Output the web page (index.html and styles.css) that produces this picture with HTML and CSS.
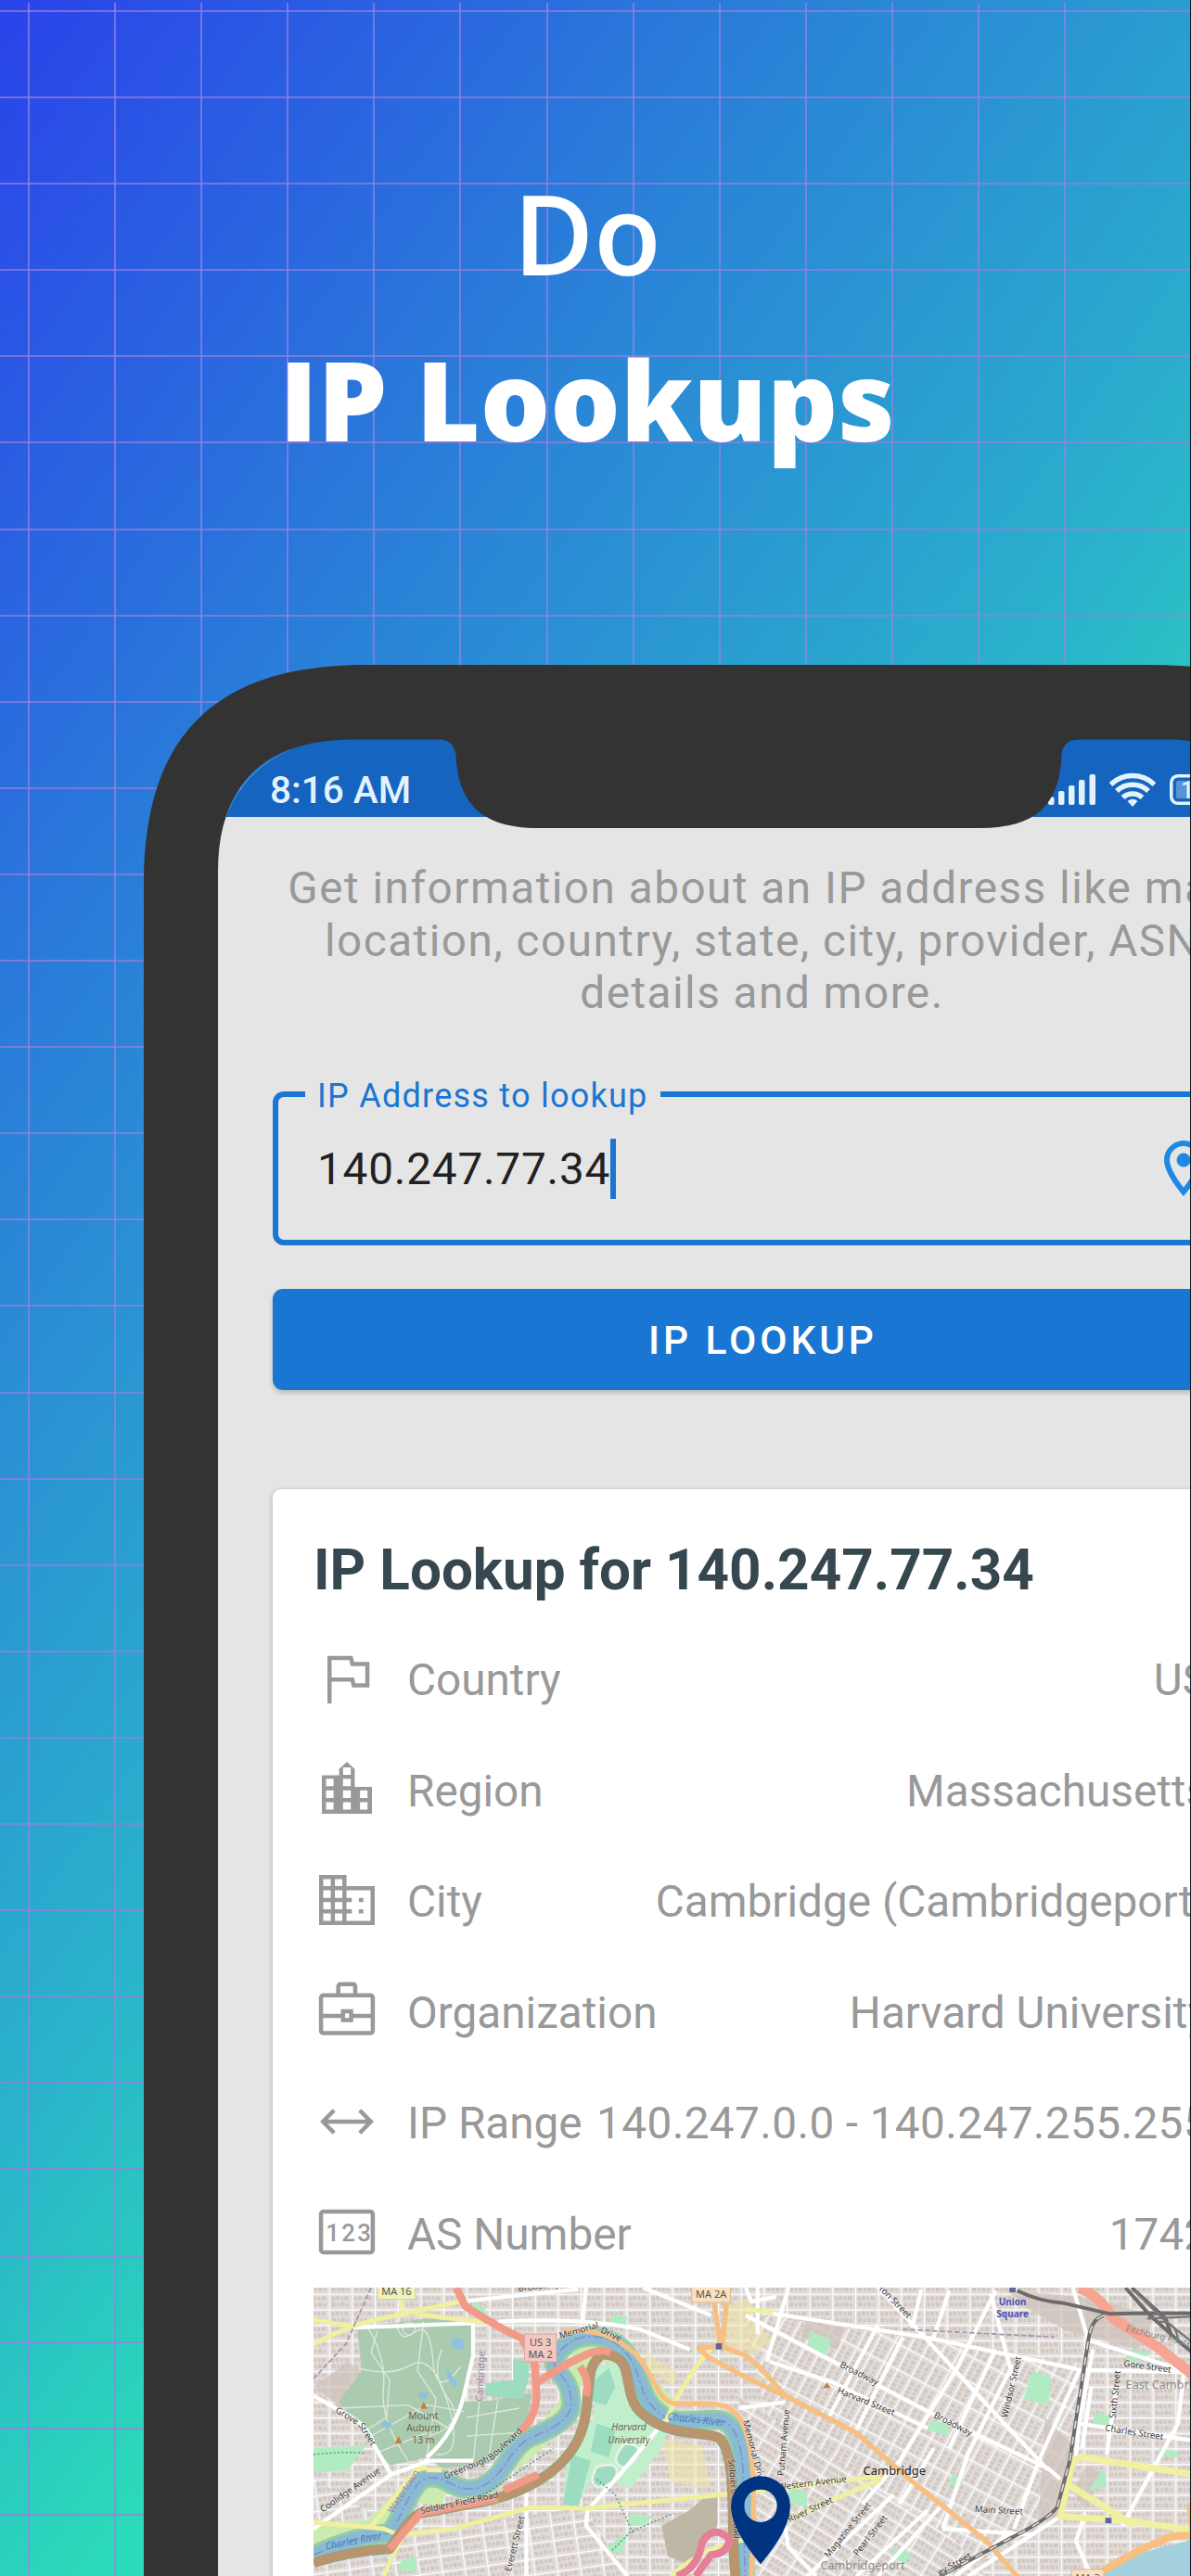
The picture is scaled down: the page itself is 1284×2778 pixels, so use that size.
FILE: index.html
```html
<!DOCTYPE html>
<html lang="en">
<head>
    <meta charset="UTF-8">
    <meta name="viewport" content="width=device-width, initial-scale=1.0">
    <title>Do IP Lookups</title>
    <link rel="stylesheet" href="styles.css">
</head>
<body>
    <header class="headline">
        <p>Do</p>
        <h1>IP Lookups</h1>
    </header>

    <div class="phone">
        <div class="screen">
            <div class="status-bar">
                <span class="time">8:16 AM</span>
                <div class="status-icons">
                    <svg width="51" height="33" viewBox="0 0 51 33" fill="#e3f2fd">
                        <rect x="0" y="24.500" width="6.500" height="8.500" rx="2"/>
                        <rect x="11" y="18" width="6.500" height="15" rx="2"/>
                        <rect x="22" y="12" width="6.500" height="21" rx="2"/>
                        <rect x="33" y="6" width="6.500" height="27" rx="2"/>
                        <rect x="44.500" y="0" width="6.500" height="33" rx="2"/>
                    </svg>
                    <svg width="50" height="37" viewBox="0 0 50 37" fill="none" stroke="#e3f2fd" stroke-width="5.500">
                        <path d="M1.500 13a34 34 0 0 1 47 0M8 20a25 25 0 0 1 34 0M14.500 27a15.500 15.500 0 0 1 21 0"/>
                        <path d="M19.500 31q5.500-4.500 11 0l-5.500 6z" fill="#e3f2fd" stroke="none"/>
                    </svg>
                    <svg width="60" height="33" viewBox="0 0 60 33">
                        <rect x="1.750" y="1.750" width="52" height="29.500" rx="7" fill="none" stroke="#e3f2fd" stroke-width="3.500"/>
                        <rect x="7" y="7" width="42" height="19" rx="2" fill="#5a92d6"/>
                        <text x="12" y="26" class="battery-text">100</text>
                    </svg>
                </div>
            </div>

            <p class="intro">Get information about an IP address like map<br>location, country, state, city, provider, ASN<br>details and more.</p>

            <fieldset class="field">
                <legend>IP Address to lookup</legend>
                <span class="value">140.247.77.34</span>
                <span class="caret"></span>
                <svg class="pin" viewBox="0 0 24 24" fill="#1e88e5">
                    <path d="M12 2C8.130 2 5 5.130 5 9c0 5.250 7 13 7 13s7-7.750 7-13c0-3.870-3.130-7-7-7zM7 9c0-2.760 2.240-5 5-5s5 2.240 5 5c0 2.880-2.880 7.190-5 9.880C9.920 16.210 7 11.850 7 9z"/>
                    <circle cx="12" cy="9" r="2.500"/>
                </svg>
            </fieldset>

            <button class="lookup" type="button">IP LOOKUP</button>

            <section class="card">
                <h2>IP Lookup for 140.247.77.34</h2>
                <div class="row">
                    <svg class="icon" viewBox="0 0 24 24"><path d="M5.750 21V4.700h7.700l.5 2.100h5.400v7.700h-4.900l-.5-2.100H5.750"/></svg>
                    <span>Country</span><span class="data">US</span>
                </div>
                <div class="row">
                    <svg class="icon solid" viewBox="0 0 24 24"><path fill-rule="evenodd" d="M3 21V7.200h6.200V4.900L12 2.300l2.800 2.600v6.400H21V21zM4.500 8.400v2.700h2.700V8.400zM4.500 12.600v2.700h2.700v-2.700zM4.500 16.800v2.700h2.700v-2.700zM10.600 4.300V7h2.800V4.300zM10.600 8.400v2.700h2.800V8.400zM10.600 12.600v2.700h2.800v-2.700zM10.600 16.800v2.700h2.800v-2.700zM16.700 12.600v2.700h2.700v-2.700zM16.700 16.800v2.700h2.700v-2.700z"/></svg>
                    <span>Region</span><span class="data">Massachusetts</span>
                </div>
                <div class="row">
                    <svg class="icon" viewBox="0 0 24 24"><path d="M2.750 3.750H11.100v4h10.150v12.500H2.750zM6.950 3.750v16.500M11.100 7.750v12.500M2.750 7.750h8.350M2.750 12h11M2.750 16.100h11M16.300 12h1.600M16.300 16.100h1.600"/></svg>
                    <span>City</span><span class="data">Cambridge (Cambridgeport)</span>
                </div>
                <div class="row">
                    <svg class="icon" viewBox="0 0 24 24"><rect x="2.700" y="6.600" width="18.600" height="13.600" rx=".9"/><path d="M8.900 6.500V3.600q0-1 1-1h4.200q.9 0 .9 1v2.900M3 14h7.500M13.500 14H21M10.600 12.300h2.900v3.200h-2.900z"/></svg>
                    <span>Organization</span><span class="data">Harvard University</span>
                </div>
                <div class="row">
                    <svg class="icon" viewBox="0 0 24 24"><path d="M3.500 12h17M7.400 7.900L3.400 12l4 4.100M16.600 7.900l4 4.100-4 4.100"/></svg>
                    <span>IP Range</span><span class="data range">140.247.0.0 - 140.247.255.255</span>
                </div>
                <div class="row">
                    <svg class="icon" viewBox="0 0 24 24"><rect x="2.700" y="4.700" width="18.600" height="14.600" rx=".9"/><text x="4.400" y="15.200" class="digits">123</text></svg>
                    <span>AS Number</span><span class="data">1742</span>
                </div>

                <svg class="map" viewBox="24 80 2880 934">
                    <defs>
                        <pattern id="blocks" width="74" height="50" patternUnits="userSpaceOnUse">
                            <rect width="74" height="50" fill="#e0dcda"/>
                            <path d="M8 9h9v12H8zM21 7h11v13H21zM37 9h8v11h-8zM50 8h13v12H50zM9 29h12v12H9zM26 30h8v11h-8zM39 28h12v13H39zM56 31h8v10h-8z" fill="#d2c6be"/>
                            <path d="M0 0h74M0 0v50" stroke="#fff" stroke-width="7"/>
                        </pattern>
                        <pattern id="blocksNE" href="#blocks" patternTransform="rotate(-62)"/>
                        <pattern id="blocksSE" href="#blocks" patternTransform="rotate(32)"/>
                        <pattern id="blocksN" href="#blocks" patternTransform="rotate(-8)"/>
                    </defs>

                    <!-- neighbourhoods -->
                    <rect x="24" y="80" width="2880" height="934" fill="url(#blocks)"/>
                    <path d="M1420 160L2520 330 2420 820 2100 1014H1750L1500 560z" fill="url(#blocksNE)"/>
                    <path d="M1400 430L2100 900 2200 1014H1420z" fill="url(#blocksSE)"/>
                    <path d="M24 700L300 860 240 1014H24zM300 880L900 790 1040 1014H260z" fill="url(#blocksN)"/>
                    <path d="M24 400l110-80 60 40-80 110zM1620 180l120 30-20 70-120-40zM2270 90l240 20 240 60-60 110-230-60-140-80zM2390 500l90 90-30 240-80-10zM2520 660l60 20-60 120-40-60z" fill="#cfc3bb" opacity=".75"/>
                    <path d="M1150 850l90-50 60-50h30v100l-80 130-80-30z" fill="#bdb8a6"/>
                    <path d="M1150 570l130 20 30 140-130-20zM1350 140l90-30v170l-90 20zM1430 170l80 80-80 60zM1100 290l100 60-10 50-90-60z" fill="#f1e4a6" opacity=".55"/>

                    <!-- parks -->
                    <path d="M165 210L390 180 540 195 535 330 500 450 600 445 730 420 715 520 690 560 590 650 440 665 390 630 270 655 200 560 105 450 180 350z" fill="#aacbaf"/>
                    <path d="M24 850L200 830 360 670 390 660 460 700 440 790 300 760 260 850 24 940zM830 260q160-60 260 80l110 110-30 40-110-50-60-110-80-20-40 120-80 140-130 110 40-100 130-160 20-120z" fill="#cdebb0"/>
                    <path d="M940 330h70l30 130 130 80-20 60-100 130-120-40-50 90h-50l20-180 80-100z" fill="#c2efcb"/>
                    <path d="M580 390l90-10v-70l50 10v50l-20 70-120-10zM920 390l60-50 20 60-30 60-40-10zM940 520l60 20-20 90-60-20zM860 620l60 20-40 150-50-10z" fill="#9cdcc0"/>
                    <path d="M24 600l170-10-60 80-110 10zM1630 220l70 30-20 50-60-20zM2350 350l60 20-10 90-80-20zM2020 510l60 10-5 40-65-20zM2550 485l55 10v30h-60zM2660 280l70 10-30 30h-50zM1560 730l60 10v50l-50-10zM2090 680l35 20-20 40-25-30zM1900 920l60 20-20 30-40-10zM1050 810l70 10-30 30h-50zM1010 890l30-10-20 60-60-10zM540 120l40 30-5 25-40-20zM990 170l50 5-10 30-45-10zM310 960l50-10-10 50-55-5zM2760 600l60 10v20l-60-5zM2580 660l10 60-60 20z" fill="#b0ebc2"/>
                    <path d="M940 660q70-20 65 20t-60 45q-35-10-5-65zM1030 585q60 0 40 40t-50 35q-40-20 10-75z" fill="#9edbc1" stroke="#e6f3e6" stroke-width="8"/>
                    <g fill="none" stroke="#dfe9dc" stroke-width="4">
                        <path d="M200 210q60 100 50 200t80 230M290 185q10 80 60 40t60 90 90 20M170 340q100 30 170-10t120 130-40 160M230 220l-20 70 60 90-10 120-80 50M380 190l-20 160 60 90-30 190M440 280q-40 80 20 160t-60 120M110 470l220-10 140 80M210 560l180-100 120 20M520 500l170-30M520 560l160-10M560 450l-20 200M620 445l-30 190M240 610l150-60"/>
                        <circle cx="332" cy="213" r="20"/>
                    </g>
                    <path d="M468 250q25-20 45 8 0 30-25 22t-20-30zM455 340l35 50-15 12-22-38zM240 520q25-18 40 8-20 20-40-8zM365 415l30 5-8 22-22-6z" fill="#8fc3dd"/>

                    <!-- Charles River -->
                    <g fill="none" stroke-linejoin="round">
                        <path d="M24 945Q170 880 270 875C330 790 340 700 400 695S470 740 550 730C650 700 650 590 740 560 830 520 870 490 855 430 850 360 780 350 810 300 870 210 980 230 1025 280 1100 360 1060 440 1170 505 1260 530 1330 480 1375 530 1430 600 1410 750 1420 1014" stroke="#96cda3" stroke-width="64"/>
                        <path d="M24 945Q170 880 270 875C330 790 340 700 400 695S470 740 550 730C650 700 650 590 740 560 830 520 870 490 855 430 850 360 780 350 810 300 870 210 980 230 1025 280 1100 360 1060 440 1170 505 1260 530 1330 480 1375 530 1430 600 1410 750 1420 1014" stroke="#8bbad3" stroke-width="46"/>
                        <path d="M24 945Q170 880 270 875C330 790 340 700 400 695S470 740 550 730C650 700 650 590 740 560 830 520 870 490 855 430 850 360 780 350 810 300 870 210 980 230 1025 280 1100 360 1060 440 1170 505 1260 530 1330 480 1375 530 1430 600 1410 750 1420 1014" stroke="#7b95cb" stroke-width="5" stroke-dasharray="34 10 6 10"/>
                    </g>
                    <path d="M2500 1014Q2640 960 2750 925L2850 900 2904 850V1014z" fill="#a3d0dc"/>

                    <!-- minor roads -->
                    <g fill="none" stroke="#fff" stroke-width="13" stroke-linejoin="round">
                        <path d="M24 430L120 485Q200 520 220 590L275 685 400 640M275 685L24 860M380 640L540 640M140 210L540 195V300L510 430Q480 550 390 630"/>
                        <path d="M500 125L880 85M620 190Q900 175 1080 215L1240 280M905 80L895 190M1090 80l220 90M1160 510L1010 690 910 800 905 850 1040 1014M712 720V1014"/>
                        <path d="M1422 150L2000 240 2500 345 2904 355M1422 170L2010 480 2400 665 2440 700M1500 320L1700 385 2010 535M1560 80L1490 320M1520 110L1440 125 1422 80M1850 80L2000 240 2240 500 2400 670M2230 90L2100 350 1920 640 1800 780M2080 90L2030 240M2215 100L2285 370"/>
                        <path d="M2285 330L2140 620 2060 860M2500 350L2370 640 2290 860M2545 280L2500 520 2490 630M2840 350L2820 520 2640 850M2480 80L2530 250 2904 370M2060 860L2350 880M2280 870L2100 1014M2060 780L1850 1014M1900 750L1620 1014M2010 800L1780 1014M2440 820L2140 1014M2520 810L2490 900 2540 1014M1540 800l20 120 90 94M2030 600L1920 780M2500 520L2904 580M2540 400l-30 200M2620 400l-30 220M2230 280L2080 600M1990 85L1960 210M1850 200l-160 300M1930 240l-150 300M1400 470l150-20M1460 80v150"/>
                    </g>

                    <!-- yellow and orange roads -->
                    <g fill="none" stroke="#eff0a0" stroke-width="15" stroke-linejoin="round">
                        <path d="M24 265Q130 205 220 185L500 125M24 185L150 205M300 85L315 170M350 165L600 195M1160 520Q1220 380 1310 275M24 840Q150 850 250 860L300 880 480 860 730 790 900 795 1440 740 1860 690M310 885L250 1014M390 665Q360 660 340 690L210 855M440 670H390M1180 1014Q1280 920 1422 895 1600 810 1860 700M1422 150l90 10"/>
                        <path d="M2904 690L2520 630Q2480 620 2470 680L2440 820 2660 835 2904 870M2460 715L2680 850" stroke-width="22"/>
                    </g>
                    <g fill="none" stroke="#f7bf80" stroke-width="16" stroke-linejoin="round">
                        <path d="M830 225C920 210 990 230 1060 290 1130 360 1130 440 1190 455 1300 460 1360 440 1400 500 1460 580 1450 800 1440 1014M1320 130L1340 270 1270 275 1300 305 1422 370 1560 435 1780 550 1940 690 2200 900 2300 1014M1360 130L1345 270 1422 300 1470 340 1550 430"/>
                        <path d="M2550 1014Q2680 930 2800 885L2870 880 2860 780M2870 880l34-20" stroke-width="24"/>
                    </g>
                    <g fill="none" stroke-linejoin="round">
                        <path d="M24 970Q150 930 270 925C320 850 350 815 370 810L560 775C740 740 890 640 905 480 920 390 905 330 960 295 1080 300 1010 430 1090 490 1180 570 1300 540 1340 570 1400 640 1370 900 1390 1014" stroke="#98a07c" stroke-width="33"/>
                        <path d="M24 970Q150 930 270 925C320 850 350 815 370 810L560 775C740 740 890 640 905 480 920 390 905 330 960 295 1080 300 1010 430 1090 490 1180 570 1300 540 1340 570 1400 640 1370 900 1390 1014" stroke="#bb946e" stroke-width="25"/>
                        <path d="M270 925L370 810 620 762M485 80L515 140Q620 210 700 245L740 330 745 430Q740 510 690 545M750 385Q850 320 900 300 950 275 985 290M905 430q15-50-20-95M640 735l110-50" stroke="#f09a87" stroke-width="25"/>
                        <path d="M2500 80Q2570 110 2610 180L2750 270 2904 390" stroke="#f5a592" stroke-width="34"/>
                        <path d="M1200 1014q70-30 80-110 40-60 90-10-10 50-60 50l-50 70" stroke="#e57f99" stroke-width="24"/>
                    </g>

                    <!-- railways -->
                    <g fill="none">
                        <path d="M2300 90Q2370 125 2450 130L2600 165Q2780 160 2904 165M2650 80L2730 170 2830 260 2904 320M2670 80L2780 180 2800 240M2580 170Q2540 180 2530 250L2470 640 2430 790Q2400 830 2280 890L2050 1014" stroke="#6c6c6c" stroke-width="12"/>
                        <path d="M2580 170Q2540 180 2530 250L2470 640 2430 790Q2400 830 2280 890L2050 1014" stroke="#ddd" stroke-width="5" stroke-dasharray="26 26"/>
                        <path d="M2720 180L2904 172M2760 190q60 0 60 70M2680 90l90 90 100 80" stroke="#777" stroke-width="7"/>
                        <path d="M1930 215L2420 240M24 375L130 260 210 80" stroke="#a58fb0" stroke-width="5" stroke-dasharray="16 8"/>
                        <path d="M24 620q90-10 170-5M560 760q120-80 240-160M940 700l60 50 60 130M990 930l60-60 140-60" stroke="#4f8f87" stroke-width="4" stroke-dasharray="6 7"/>
                    </g>
                    <path d="M1325 260h20v20h-20zM2275 80h20v15h-20zM2585 825h20v18h-20z" fill="#5c63a6"/>
                    <path d="M370 472l10-22 12 22zM287 585l12-24 12 24zM1672 405l14-18 10 18z" fill="#c77d3b"/>

                    <!-- shields and labels -->
                    <g stroke-width="3">
                        <rect x="231" y="60" width="123" height="58" fill="#eef3bd" stroke="#cfd391"/>
                        <rect x="1247" y="70" width="125" height="58" fill="#fadfc0" stroke="#dcb88e"/>
                        <rect x="706" y="230" width="104" height="90" fill="#f3c8c0" stroke="#dea49b"/>
                        <rect x="2476" y="992" width="104" height="58" fill="#fadfc0" stroke="#dcb88e"/>
                    </g>
                    <g class="shield">
                        <text x="292" y="104">MA 16</text>
                        <text x="1310" y="114">MA 2A</text>
                        <text x="758" y="270">US 3</text>
                        <text x="758" y="309">MA 2</text>
                        <text x="2528" y="1030">MA 3</text>
                    </g>
                    <g class="street">
                        <text transform="translate(686 92) rotate(-6)">Broadway</text>
                        <text transform="translate(93 482) rotate(31)">Grove</text>
                        <text transform="translate(168 525) rotate(58)">Street</text>
                        <text transform="translate(54 808) rotate(-35)">Coolidge Avenue</text>
                        <text transform="translate(662 1000) rotate(-76)">Everett Street</text>
                        <text transform="translate(1852 85) rotate(46)">ton Street</text>
                        <text transform="translate(1724 336) rotate(27)">Broadway</text>
                        <text transform="translate(1716 420) rotate(22)">Harvard Street</text>
                        <text transform="translate(2028 499) rotate(27)">Broadway</text>
                        <text transform="translate(1545 690) rotate(-85)">Putnam Avenue</text>
                        <text transform="translate(2268 502) rotate(-77)">Windsor Street</text>
                        <text transform="translate(2618 504) rotate(-84)">Sixth Street</text>
                        <text transform="translate(2643 334) rotate(8)">Gore Street</text>
                        <text transform="translate(2583 543) rotate(9)">Charles Street</text>
                        <text transform="translate(2162 806) rotate(3)">Main Street</text>
                        <text transform="translate(1528 735) rotate(-7)">Western Avenue</text>
                        <text transform="translate(1564 840) rotate(-25)">River Street</text>
                        <text transform="translate(1690 956) rotate(-51)">Magazine Street</text>
                        <text transform="translate(1784 950) rotate(-52)">Pearl Street</text>
                        <text transform="translate(2050 1012) rotate(-30)">ey Street</text>
                        <text transform="translate(822 246) rotate(-16)">Memorial</text>
                        <text transform="translate(950 224) rotate(26)">Drive</text>
                        <text transform="translate(1412 512) rotate(75)">Memorial Drive</text>
                        <text transform="translate(450 700) rotate(-22)">Greenough</text>
                        <text transform="translate(600 640) rotate(-43)">Boulevard</text>
                        <text transform="translate(372 812) rotate(-12)">Soldiers Field Road</text>
                        <text transform="translate(1366 636) rotate(86)">Soldiers Field Road</text>
                    </g>
                    <g class="river">
                        <text transform="translate(64 928) rotate(-11)">Charles River</text>
                        <text transform="translate(1168 506) rotate(7)">Charles River</text>
                    </g>
                    <g class="place">
                        <text x="379" y="507">Mount</text>
                        <text x="379" y="545">Auburn</text>
                        <text x="379" y="583">13 m</text>
                    </g>
                    <g class="place italic">
                        <text x="1044" y="543">Harvard</text>
                        <text x="1044" y="584">University</text>
                    </g>
                    <g class="border-name">
                        <text transform="translate(570 448) rotate(-87)">Cambridge</text>
                        <text transform="translate(280 812) rotate(-57)">Watertown</text>
                    </g>
                    <g class="station">
                        <text x="2285" y="138">Union</text>
                        <text x="2285" y="177">Square</text>
                    </g>
                    <text x="1903" y="686" class="city">Cambridge</text>
                    <text x="1800" y="993" class="suburb" text-anchor="middle">Cambridgeport</text>
                    <text x="2651" y="406" class="suburb">East Cambridge</text>
                    <text transform="translate(2650 222) rotate(13)" class="rail">Fitchburg Route</text>

                    <!-- marker -->
                    <path fill-rule="evenodd" fill="#003482" d="M1470 975Q1374 860 1374 787a96 97 0 0 1 192 0Q1566 860 1470 975zM1470 733a53 53 0 1 0 .1 0z"/>
                </svg>
            </section>
        </div>

        <!-- bezel with the notch, drawn over the screen -->
        <svg class="bezel" viewBox="0 0 1326 2100" fill="#333">
            <path fill-rule="evenodd" d="M0 2100V236C0 68 85 0 240 0H1086C1241 0 1326 68 1326 236V2100zM80 2100H1246V223C1246 125 1191 80.500 1101 80.500H1009C997 80.500 990 86 989.500 98C987 151 962 176 902 176H426C366 176 339 151 336.500 98C335.500 86 328 80.500 318 80.500H225C135 80.500 80 125 80 223z"/>
        </svg>
    </div>
</body>
</html>
```
FILE: styles.css
```css
body {
    position: relative;
    margin: 0;
    width: 1284px;
    height: 2778px;
    overflow: hidden;
    box-sizing: border-box;
    border-right: 1px solid #0b1a20;
    font-family: Roboto, sans-serif;
    background:
        repeating-linear-gradient(to bottom, rgba(155, 125, 220, 0.7) 0 2px, transparent 2px 93.1px) 0 11px no-repeat,
        linear-gradient(125deg, #2a43ea 0, #2a80d8 690px, #2ab3cb 1330px, #2bdab8 1670px);
}

/* vertical grid lines */
body::before {
    content: "";
    position: absolute;
    top: 3px;
    left: 30px;
    width: 1120px;
    height: 2775px;
    background: repeating-linear-gradient(to right, rgba(150, 130, 225, 0.7) 0 2px, transparent 2px 93.1px);
}

.headline {
    position: relative;
    height: 717px;
    padding-top: 162px;
    box-sizing: border-box;
    width: 1266px;
    text-align: center;
    color: #fff;
    font-family: "Open Sans", sans-serif;
}

.headline p,
.headline h1 {
    margin: 0;
    font-size: 118.8px;
    line-height: 179px;
    font-weight: 600;
}

.headline h1 {
    font-weight: 800;
}

.phone {
    position: relative;
    width: 1326px;
    height: 2100px;
    margin-left: 155px;
}

.bezel {
    position: absolute;
    top: 0;
    left: 0;
    width: 1326px;
    height: 2100px;
}

.screen {
    position: absolute;
    top: 80px;
    left: 80px;
    width: 1166px;
    height: 2020px;
    box-sizing: border-box;
    overflow: hidden;
    background: #e5e5e5;
    border-radius: 130px 130px 0 0;
}

.status-bar {
    display: flex;
    justify-content: space-between;
    align-items: flex-end;
    height: 84px;
    padding: 0 80px 5px 56px;
    box-sizing: border-box;
    background: #1565c0;
    color: #e3f2fd;
}

.time {
    font-size: 40.5px;
    line-height: 48px;
    font-weight: 500;
}

.status-icons {
    display: flex;
    gap: 15px;
    align-items: center;
    padding-bottom: 6px;
}

.battery-text {
    font-size: 25px;
    font-weight: 500;
    fill: #e3f2fd;
}

.intro {
    margin: 49px 0 59px;
    padding-left: 7px;
    text-align: center;
    font-size: 47.7px;
    line-height: 56.6px;
    letter-spacing: 1.5px;
    color: #999;
    white-space: nowrap;
}

.field {
    display: flex;
    align-items: center;
    height: 184px;
    margin: 0 59px;
    padding: 0 24px 17px 42px;
    box-sizing: border-box;
    border: 6.500px solid #1976d2;
    border-radius: 12px;
}

.field legend {
    margin-left: -13px;
    padding: 4px 13px 0;
    font-size: 36px;
    line-height: 38px;
    letter-spacing: 1.25px;
    color: #1976d2;
}

.value {
    padding-top: 2px;
    font-size: 47.7px;
    letter-spacing: 0.8px;
    color: #212121;
}

.caret {
    width: 6px;
    height: 65px;
    background: #1976d2;
}

.pin {
    width: 72px;
    height: 72px;
    margin-left: auto;
}

.lookup {
    display: block;
    width: 1048px;
    height: 109px;
    margin: 47px 59px 0;
    padding: 2px 0 0 9px;
    border: none;
    border-radius: 11px;
    background: #1976d2;
    color: #fff;
    font-family: inherit;
    font-size: 42.5px;
    font-weight: 500;
    letter-spacing: 3.9px;
    box-shadow: 0 3px 5px rgba(0, 0, 0, 0.2);
}

.card {
    margin: 107px 59px 0;
    padding: 52px 39px 0 44px;
    height: 1200px;
    box-sizing: border-box;
    border-radius: 9px;
    background: #fff;
    box-shadow: 0 2px 6px rgba(0, 0, 0, 0.25);
}

.card h2 {
    margin: 0 0 20px 0;
    font-size: 60.2px;
    line-height: 72px;
    color: #37474f;
}

.row {
    display: flex;
    align-items: center;
    height: 119.5px;
    font-size: 47.7px;
    color: #999;
    white-space: nowrap;
}

.row span {
    padding-top: 5px;
}

.row .data {
    margin-left: auto;
}

.row .range {
    letter-spacing: 0.4px;
}

.icon {
    width: 72px;
    height: 72px;
    margin-right: 29px;
    fill: none;
    stroke: #999;
    stroke-width: 1.5;
}

.icon.solid {
    fill: #999;
    stroke: none;
}

.digits {
    font-size: 8.6px;
    font-weight: 500;
    letter-spacing: 0.8px;
    fill: #999;
    stroke: none;
}

.map {
    display: block;
    width: 960px;
    height: 311.300px;
    font-family: "Noto Sans", sans-serif;
}

.street {
    font-size: 29px;
    fill: #333;
    stroke: #fff;
    stroke-opacity: 0.5;
    stroke-width: 4px;
    paint-order: stroke;
}

.shield {
    font-size: 33px;
    fill: #555;
    text-anchor: middle;
}

.river {
    font-size: 32px;
    font-style: italic;
    fill: #4c7fbd;
}

.place {
    font-size: 31px;
    fill: #756050;
    text-anchor: middle;
}

.italic {
    font-style: italic;
}

.border-name {
    font-size: 31px;
    fill: #9a83ad;
}

.station {
    font-size: 30px;
    font-weight: 700;
    fill: #4b51b0;
    text-anchor: middle;
}

.city {
    font-size: 39px;
    fill: #222;
    text-anchor: middle;
}

.suburb {
    font-size: 38px;
    fill: #8b8b8b;
}

.rail {
    font-size: 29px;
    fill: #888;
}
```
